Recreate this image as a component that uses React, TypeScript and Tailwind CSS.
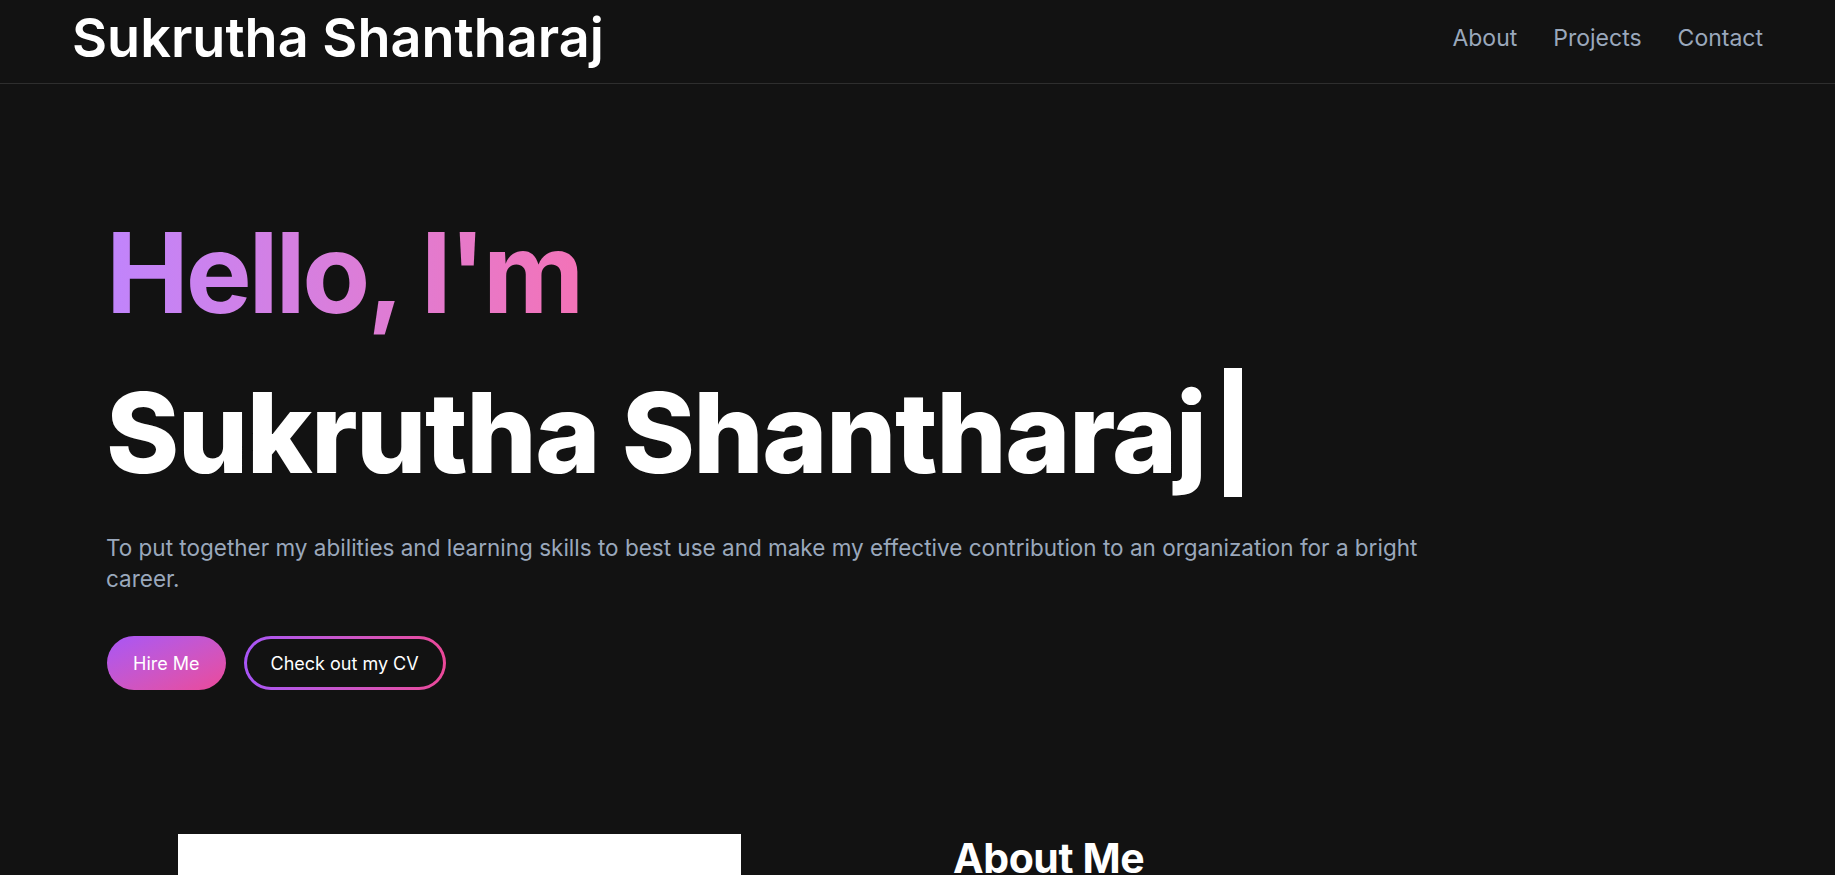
const navLinks = ["About", "Projects", "Contact"];

const Header = () => (
  <header className="h-[84px] border-b border-[#2e2e2e] flex items-center justify-between px-[72px] pb-[7px]">
    <a href="#" className="text-[54px] font-semibold text-white leading-none">
      Sukrutha Shantharaj
    </a>
    <nav className="flex gap-x-[36px] text-[23px] text-[#9aa8bc]">
      {navLinks.map((link) => (
        <a key={link} href={`#${link.toLowerCase()}`} className="hover:text-white">
          {link}
        </a>
      ))}
    </nav>
  </header>
);

const Hero = () => (
  <section className="px-[106px] pt-[133px]">
    <h1>
      <span className="block font-bold text-[111px] leading-none tracking-[-0.029em] bg-gradient-to-r from-[#c084fc] to-[#f472b6] bg-clip-text text-transparent w-fit pb-2 pr-2">
        Hello, I'm
      </span>
      <span className="flex items-start mt-[41px] font-extrabold text-[111px] leading-none tracking-[-0.014em] text-white">
        Sukrutha Shantharaj
        <span className="inline-block ml-[18px] w-[18px] h-[129px] bg-white -mt-[9px]" />
      </span>
    </h1>
    <p className="mt-[35px] max-w-[1360px] text-[22.5px] leading-[31px] text-[#9aa8bc]">
      To put together my abilities and learning skills to best use and make my effective contribution to an
      organization for a bright career.
    </p>
    <div className="mt-[42px] flex items-center gap-x-[18px]">
      <a
        href="#contact"
        className="h-[54px] px-[26px] ml-[1px] flex items-center rounded-full bg-gradient-to-br from-[#a855f7] to-[#ec4899] text-white text-[18px]"
      >
        Hire Me
      </a>
      <a href="#" className="h-[54px] p-[3px] rounded-full bg-gradient-to-r from-[#a855f7] to-[#ec4899]">
        <span className="h-full px-[24px] flex items-center rounded-full bg-[#121212] text-white text-[18px]">
          Check out my CV
        </span>
      </a>
    </div>
  </section>
);

const About = () => (
  <section id="about" className="mt-[144px] pl-[178px] flex gap-x-[212px]">
    <div className="w-[563px] h-[420px] bg-white shrink-0" />
    <div>
      <h2 className="text-[41px] font-bold text-white leading-[48px] tracking-[-0.01em]">About Me</h2>
    </div>
  </section>
);

export default function App() {
  return (
    <div className="min-h-screen bg-[#121212] font-['Inter',sans-serif] overflow-hidden">
      <Header />
      <Hero />
      <About />
    </div>
  );
}
